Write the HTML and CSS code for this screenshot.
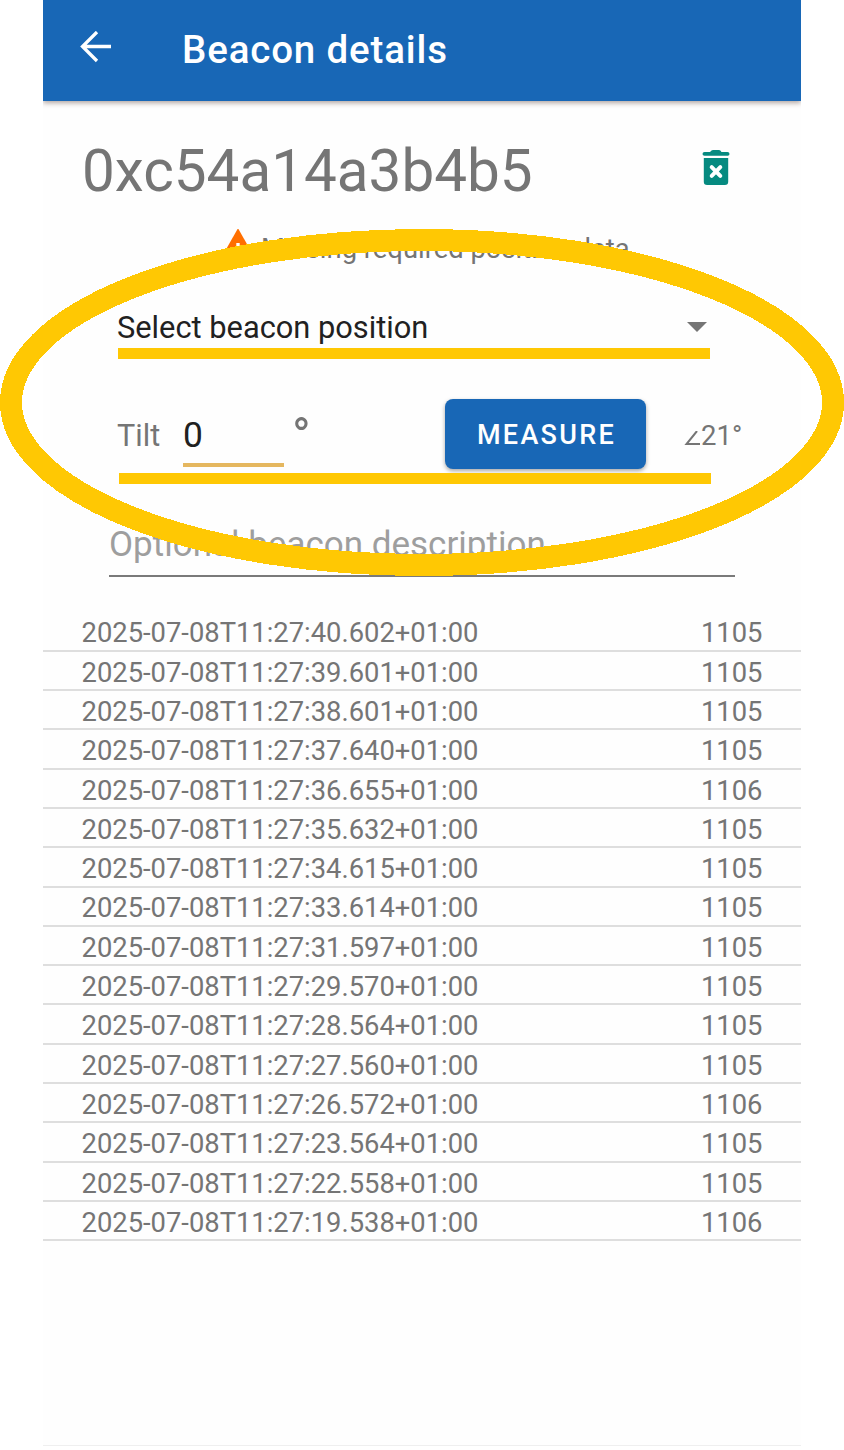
FILE: index.html
```html
<!DOCTYPE html>
<html lang="en">
<head>
<meta charset="utf-8">
<title>Beacon details</title>
<link rel="stylesheet" href="styles.css">
</head>
<body>
<main class="screen">
  <header class="appbar">
    <svg class="back" viewBox="0 0 32 32" fill="none" stroke="#fff" stroke-width="3.3"><path d="M31 15.500H3M17 1 2.500 15.500 17 30"/></svg>
    <h1 class="title">Beacon details</h1>
  </header>
  <section class="idrow">
    <span class="beacon-id">0xc54a14a3b4b5</span>
    <svg class="trash" viewBox="0 0 28 36"><path fill="#068a80" d="M2.500 2h5.500Q9.500 0 11 0h6q1.500 0 2.500 2H25.500q2 0 2 1.900t-2 1.800H2.500q-2 0-2-1.800t2-1.900zM1.800 8h24.400V31.700q0 3.300-3.300 3.300H5.100Q1.800 35 1.800 31.700z"/><path d="m9.700 17.200 8.600 8.600m0-8.600L9.700 25.800" stroke="#fff" stroke-width="4" stroke-linecap="round"/></svg>
  </section>
  <p class="warning">
    <svg class="alert" viewBox="0 0 28 24"><path fill="#ff6f00" d="M14-.8 28 24H0z"/><path fill="#fff" d="M12.300 18h3.400v-4h-3.400z"/></svg>
    <span>Missing required position data</span>
  </p>
  <div class="select">
    <span>Select beacon position</span>
    <svg class="caret" viewBox="0 0 20 10"><path fill="#757575" d="M0 0h20L10 10z"/></svg>
  </div>
  <div class="tilt">
    <span class="tilt-label">Tilt</span>
    <span class="tilt-value">0</span>
    <span class="degree">°</span>
    <button class="measure">MEASURE</button>
    <span class="angle"><svg class="angle-icon" viewBox="0 0 17 16" fill="none" stroke="#757575" stroke-width="2"><path d="M13 0 2.500 13h13.500"/></svg>21°</span>
  </div>
  <div class="description">Optional beacon description</div>
  <ul class="log">
    <li><span>2025-07-08T11:27:40.602+01:00</span><span>1105</span></li>
    <li><span>2025-07-08T11:27:39.601+01:00</span><span>1105</span></li>
    <li><span>2025-07-08T11:27:38.601+01:00</span><span>1105</span></li>
    <li><span>2025-07-08T11:27:37.640+01:00</span><span>1105</span></li>
    <li><span>2025-07-08T11:27:36.655+01:00</span><span>1106</span></li>
    <li><span>2025-07-08T11:27:35.632+01:00</span><span>1105</span></li>
    <li><span>2025-07-08T11:27:34.615+01:00</span><span>1105</span></li>
    <li><span>2025-07-08T11:27:33.614+01:00</span><span>1105</span></li>
    <li><span>2025-07-08T11:27:31.597+01:00</span><span>1105</span></li>
    <li><span>2025-07-08T11:27:29.570+01:00</span><span>1105</span></li>
    <li><span>2025-07-08T11:27:28.564+01:00</span><span>1105</span></li>
    <li><span>2025-07-08T11:27:27.560+01:00</span><span>1105</span></li>
    <li><span>2025-07-08T11:27:26.572+01:00</span><span>1106</span></li>
    <li><span>2025-07-08T11:27:23.564+01:00</span><span>1105</span></li>
    <li><span>2025-07-08T11:27:22.558+01:00</span><span>1105</span></li>
    <li><span>2025-07-08T11:27:19.538+01:00</span><span>1106</span></li>
  </ul>
</main>
<svg class="highlight" viewBox="0 0 844 348" shape-rendering="crispEdges">
  <ellipse cx="422" cy="173.500" rx="411" ry="162.500" fill="none" stroke="#ffc803" stroke-width="22"/>
  <path fill="#ffc803" d="M118 119h592v11H118zM119 244h592v11H119z"/>
</svg>
</body>
</html>
```

FILE: styles.css
```css
* { box-sizing: border-box; }
body { margin: 0; background: #fff; font-family: Roboto, "Liberation Sans", sans-serif; color: #757575; position: relative; height: 1450px; overflow: hidden; }
.screen { width: 758px; height: 1446px; margin-left: 43px; background: #fefefe; border-bottom: 1px solid #efefef; display: flex; flex-direction: column; white-space: nowrap; }
.appbar { height: 101px; flex: none; background: #1867b6; display: flex; align-items: flex-start; padding: 31px 0 0 37px; box-shadow: 0 2px 5px rgba(60, 30, 20, .4); clip-path: inset(0 0 -12px 0); }
.back { width: 32px; height: 32px; margin-right: 70px; }
.title { margin: -4px 0 0; font-size: 38.500px; line-height: 46px; font-weight: 500; letter-spacing: .850px; color: #fff; }
.idrow { height: 128px; flex: none; display: flex; justify-content: space-between; align-items: flex-start; padding: 35px 71px 0 39px; }
.beacon-id { font-size: 58.400px; line-height: 70px; }
.trash { width: 28px; height: 36px; margin-top: 14px; }
.warning { margin: 0; height: 70px; flex: none; display: flex; padding-left: 181px; font-size: 27.400px; line-height: 40px; gap: 9px; }
.alert { width: 28px; height: 24px; }
.select { height: 60px; flex: none; display: flex; justify-content: space-between; padding: 11px 94px 0 74px; font-size: 30.800px; line-height: 36px; color: #212121; }
.caret { width: 20px; height: 10px; margin-top: 12px; }
.tilt { height: 140px; flex: none; display: flex; align-items: flex-start; padding: 40px 0 0 74px; font-size: 30.600px; }
.tilt-label { width: 66px; line-height: 36px; margin-top: 19px; }
.tilt-value { width: 101px; height: 68px; padding-top: 15px; font-size: 35.400px; line-height: 42px; color: #212121; border-bottom: 4px solid #e5b75f; }
.degree { width: 161px; padding-left: 8px; font-size: 50px; line-height: 54px; margin-top: 11px; }
.measure { width: 201px; height: 70px; border: 0; border-radius: 8px; background: #1867b6; color: #fff; font: 500 27px/68px Roboto, sans-serif; letter-spacing: 2.300px; padding: 3px 0 0 2px; box-shadow: 0 2px 4px rgba(0, 0, 0, .35); line-height: 67px; }
.angle { display: flex; margin-left: 38px; font-size: 27.500px; line-height: 34px; margin-top: 20px; }
.angle-icon { width: 17px; height: 16px; margin-top: 12px; }
.description { height: 78px; flex: none; margin: 0 66px; padding-top: 26px; font-size: 35px; line-height: 40px; color: #9e9e9e; border-bottom: 2px solid #7a7a7a; }
.log { list-style: none; margin: 35.500px 0 0; padding: 0; }
.log li { height: 39.300px; display: flex; justify-content: space-between; padding: 3.900px 38.500px 0; font-size: 27.370px; line-height: 34px; border-bottom: 2px solid #dedede; }
.highlight { position: absolute; left: 0; top: 229px; width: 844px; height: 348px; }
```
